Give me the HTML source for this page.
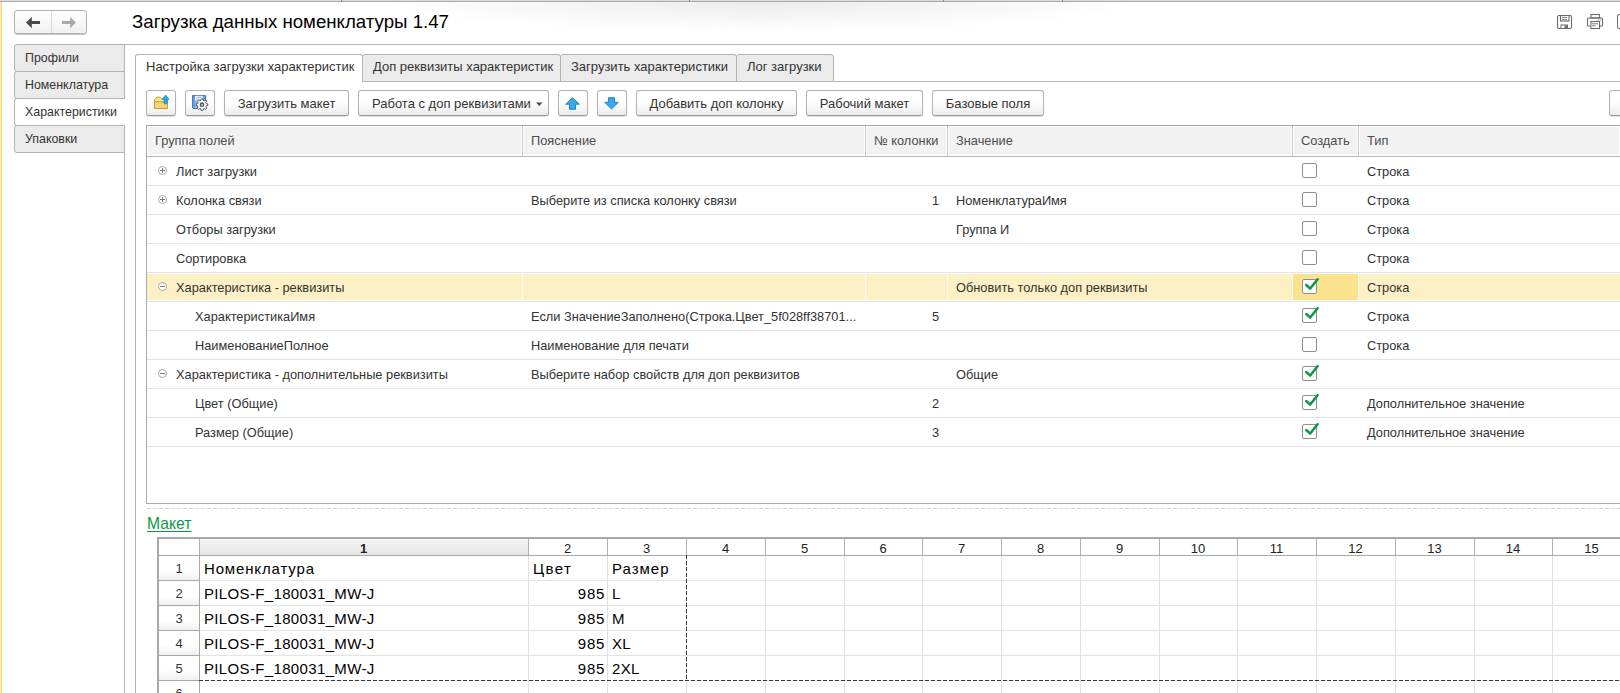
<!DOCTYPE html>
<html><head><meta charset="utf-8">
<style>
*{box-sizing:border-box;margin:0;padding:0}
html,body{width:1620px;height:693px;overflow:hidden;background:#fff}
body{position:relative;font-family:"Liberation Sans",sans-serif;font-size:13px;color:#333}
.a{position:absolute}
.t{position:absolute;white-space:nowrap;line-height:16px;font-size:12.8px}
/* top line & left strip */
#topline{left:0;top:0;width:1620px;height:2px;background:linear-gradient(#dcdcdc 50%,#a9a9a9 50%)}
#strip{left:0;top:2px;width:2px;height:691px;background:linear-gradient(90deg,#fde896 0,#fde896 60%,#d6c98e 100%)}
/* nav buttons */
#nav{left:14px;top:10px;width:73px;height:24px;border:1px solid #b0b0b0;border-radius:3px;background:linear-gradient(#fff,#f1f1f1);box-shadow:0 1px 0 #c8c8c8}
#nav .sep{left:36px;top:0;width:1px;height:22px;background:#d8d8d8}
#title{left:132px;top:11px;font-size:18.67px;line-height:22px;color:#000}
/* sidebar */
.stab{position:absolute;left:14px;width:111px;height:28px;border:1px solid #b4b4b4;border-radius:3px 0 0 3px;background:#ebebeb;padding-left:10px;padding-top:1px;line-height:25px;color:#333;font-size:12.4px}
.stab.sel{background:#fff;border-right:none;width:111px}
#sideline{left:124px;top:44px;width:1px;height:649px;background:#b4b4b4}
#contline{left:124px;top:44px;width:1496px;height:1px;background:#b4b4b4}
/* main panel */
#panel{left:135px;top:81px;width:1490px;height:620px;border-left:1px solid #b4b4b4;border-top:1px solid #b4b4b4}
.mtab{position:absolute;top:54px;height:28px;border:1px solid #b4b4b4;border-radius:3px 3px 0 0;background:#ebebeb;padding-left:10px;line-height:23px;color:#333}
.mtab.sel{background:#fff;border-bottom:none;height:28px}
/* buttons */
.btn{position:absolute;top:90px;height:26px;border:1px solid #b2b2b2;border-bottom-color:#9a9a9a;border-radius:3px;background:linear-gradient(#fff 0,#fff 45%,#ececec 100%);box-shadow:0 1px 1px rgba(0,0,0,.12);color:#333;text-align:center;line-height:26px;font-size:13px}
/* table */
#grid{left:146px;top:125px;width:1480px;height:379px;border:1px solid #a9a9a9;background:#fff}
.hd{position:absolute;top:126px;height:30px;background:#f2f2f2;border:1px solid #fff;color:#4d4d4d;line-height:27px;padding-left:8px}
.vsep{position:absolute;top:126px;width:1px;height:30px;background:#c8c8c8}
#hline{left:147px;top:156px;width:1473px;height:1px;background:#b5b5b5}
.rl{position:absolute;left:147px;width:1473px;height:1px;background:#e3e3e3}
.cb{position:absolute;width:15px;height:15px;border:1px solid #8f8f8f;border-radius:2px;background:#fff}
.tree{position:absolute;width:10px;height:10px}
</style></head><body>
<div class="a" style="left:380px;top:2px;width:760px;height:30px;background:radial-gradient(ellipse 50% 100% at 50% 0%,rgba(0,0,0,0.075),rgba(0,0,0,0.04) 50%,rgba(0,0,0,0) 100%)"></div>
<div class="a" id="topline"></div>
<div class="a" style="left:341px;top:0;width:1px;height:2px;background:#8a8a8a"></div>
<div class="a" style="left:689px;top:0;width:1px;height:2px;background:#8a8a8a"></div>
<div class="a" style="left:943px;top:0;width:1px;height:2px;background:#8a8a8a"></div>
<div class="a" style="left:1062px;top:0;width:1px;height:2px;background:#8a8a8a"></div>
<div class="a" id="strip"></div>

<div class="a" id="nav"><div class="a sep"></div>
<svg class="a" style="left:11px;top:6px" width="15" height="12" viewBox="0 0 15 12"><path d="M0 5.6 L5.8 0 L5.8 4.1 L14 4.1 L14 7 L5.8 7 L5.8 11.2 Z" fill="#4a4a4a"/></svg>
<svg class="a" style="left:47px;top:6px" width="15" height="12" viewBox="0 0 15 12"><path d="M14 5.6 L8.2 0 L8.2 4.1 L0 4.1 L0 7 L8.2 7 L8.2 11.2 Z" fill="#a8a8a8"/></svg>
</div>
<div class="t" id="title">Загрузка данных номенклатуры 1.47</div>

<!-- sidebar -->
<div class="a" id="contline"></div>
<div class="a" id="sideline"></div>
<div class="stab" style="top:44px">Профили</div>
<div class="stab" style="top:71px">Номенклатура</div>
<div class="stab sel" style="top:98px">Характеристики</div>
<div class="stab" style="top:125px">Упаковки</div>


<!-- main panel -->
<div class="a" style="left:135px;top:81px;width:1485px;height:1px;background:#b4b4b4"></div>
<div class="a" style="left:135px;top:60px;width:1px;height:633px;background:#b4b4b4"></div>
<div class="mtab sel" style="left:135px;width:228px">Настройка загрузки характеристик</div>
<div class="mtab" style="left:362px;width:199px">Доп реквизиты характеристик</div>
<div class="mtab" style="left:560px;width:177px">Загрузить характеристики</div>
<div class="mtab" style="left:736px;width:98px">Лог загрузки</div>

<div class="btn" style="left:146px;width:30px"></div>
<div class="btn" style="left:185px;width:30px"></div>
<div class="btn" style="left:224px;width:125px">Загрузить макет</div>
<div class="btn" style="left:358px;width:191px;text-align:left;padding-left:13px">Работа с доп реквизитами</div>
<div class="btn" style="left:558px;width:30px"></div>
<div class="btn" style="left:597px;width:30px"></div>
<div class="btn" style="left:636px;width:161px">Добавить доп колонку</div>
<div class="btn" style="left:806px;width:117px">Рабочий макет</div>
<div class="btn" style="left:932px;width:112px">Базовые поля</div>
<div class="btn" style="left:1609px;width:30px"></div>

<!-- grid -->
<div class="a" style="left:146px;top:125px;width:1474px;height:1px;background:#a9a9a9"></div>
<div class="a" style="left:146px;top:125px;width:1px;height:379px;background:#a9a9a9"></div>
<div class="a" style="left:146px;top:503px;width:1474px;height:1px;background:#a9a9a9"></div>
<div class="a" style="left:147px;top:126px;width:1473px;height:30px;background:#fff"></div>
<div class="a" style="left:148px;top:127px;width:373px;height:28px;background:#f2f2f2"></div>
<div class="t" style="left:155px;top:133px;color:#4d4d4d">Группа полей</div>
<div class="a" style="left:524px;top:127px;width:340px;height:28px;background:#f2f2f2"></div>
<div class="t" style="left:531px;top:133px;color:#4d4d4d">Пояснение</div>
<div class="a" style="left:522px;top:126px;width:1px;height:30px;background:#c9c9c9"></div>
<div class="a" style="left:867px;top:127px;width:79px;height:28px;background:#f2f2f2"></div>
<div class="t" style="left:874px;top:133px;color:#4d4d4d">№ колонки</div>
<div class="a" style="left:865px;top:126px;width:1px;height:30px;background:#c9c9c9"></div>
<div class="a" style="left:949px;top:127px;width:342px;height:28px;background:#f2f2f2"></div>
<div class="t" style="left:956px;top:133px;color:#4d4d4d">Значение</div>
<div class="a" style="left:947px;top:126px;width:1px;height:30px;background:#c9c9c9"></div>
<div class="a" style="left:1294px;top:127px;width:63px;height:28px;background:#f2f2f2"></div>
<div class="t" style="left:1301px;top:133px;color:#4d4d4d">Создать</div>
<div class="a" style="left:1292px;top:126px;width:1px;height:30px;background:#c9c9c9"></div>
<div class="a" style="left:1360px;top:127px;width:259px;height:28px;background:#f2f2f2"></div>
<div class="t" style="left:1367px;top:133px;color:#4d4d4d">Тип</div>
<div class="a" style="left:1358px;top:126px;width:1px;height:30px;background:#c9c9c9"></div>
<div class="a" style="left:147px;top:156px;width:1473px;height:1px;background:#b8b8b8"></div>
<svg class="a" style="left:158px;top:166px" width="9" height="9" viewBox="0 0 9 9"><circle cx="4.5" cy="4.5" r="4" fill="#fff" stroke="#a8a8a8" stroke-width="1"/><path d="M2 4.5 H7" stroke="#7a7a7a" stroke-width="1"/><path d="M4.5 2 V7" stroke="#7a7a7a" stroke-width="1"/></svg>
<div class="t" style="left:176px;top:164px">Лист загрузки</div>
<div class="cb" style="left:1302px;top:163px"></div>
<div class="t" style="left:1367px;top:164px">Строка</div>
<div class="rl" style="top:185px"></div>
<svg class="a" style="left:158px;top:195px" width="9" height="9" viewBox="0 0 9 9"><circle cx="4.5" cy="4.5" r="4" fill="#fff" stroke="#a8a8a8" stroke-width="1"/><path d="M2 4.5 H7" stroke="#7a7a7a" stroke-width="1"/><path d="M4.5 2 V7" stroke="#7a7a7a" stroke-width="1"/></svg>
<div class="t" style="left:176px;top:193px">Колонка связи</div>
<div class="t" style="left:531px;top:193px">Выберите из списка колонку связи</div>
<div class="t" style="left:865px;width:74px;text-align:right;top:193px">1</div>
<div class="t" style="left:956px;top:193px">НоменклатураИмя</div>
<div class="cb" style="left:1302px;top:192px"></div>
<div class="t" style="left:1367px;top:193px">Строка</div>
<div class="rl" style="top:214px"></div>
<div class="t" style="left:176px;top:222px">Отборы загрузки</div>
<div class="t" style="left:956px;top:222px">Группа И</div>
<div class="cb" style="left:1302px;top:221px"></div>
<div class="t" style="left:1367px;top:222px">Строка</div>
<div class="rl" style="top:243px"></div>
<div class="t" style="left:176px;top:251px">Сортировка</div>
<div class="cb" style="left:1302px;top:250px"></div>
<div class="t" style="left:1367px;top:251px">Строка</div>
<div class="rl" style="top:272px"></div>
<div class="a" style="left:147px;top:274px;width:1473px;height:26px;background:#fdf0c4"></div>
<div class="a" style="left:522px;top:273px;width:1px;height:28px;background:#fffaf0"></div>
<div class="a" style="left:865px;top:273px;width:1px;height:28px;background:#fffaf0"></div>
<div class="a" style="left:947px;top:273px;width:1px;height:28px;background:#fffaf0"></div>
<div class="a" style="left:1292px;top:273px;width:1px;height:28px;background:#fffaf0"></div>
<div class="a" style="left:1358px;top:273px;width:1px;height:28px;background:#fffaf0"></div>
<div class="a" style="left:1293px;top:274px;width:65px;height:26px;background:#fbe28f"></div>
<svg class="a" style="left:158px;top:282px" width="9" height="9" viewBox="0 0 9 9"><circle cx="4.5" cy="4.5" r="4" fill="#fff" stroke="#a8a8a8" stroke-width="1"/><path d="M2 4.5 H7" stroke="#7a7a7a" stroke-width="1"/></svg>
<div class="t" style="left:176px;top:280px">Характеристика - реквизиты</div>
<div class="t" style="left:956px;top:280px">Обновить только доп реквизиты</div>
<div class="cb" style="left:1302px;top:279px"><svg class="a" style="left:1px;top:-2px" width="15" height="14" viewBox="0 0 15 14"><path d="M2.3 7.0 L6.2 10.6 L13.6 1.2" fill="none" stroke="#119447" stroke-width="2.5" stroke-linecap="round" stroke-linejoin="round"/></svg></div>
<div class="t" style="left:1367px;top:280px">Строка</div>
<div class="rl" style="top:301px"></div>
<div class="t" style="left:195px;top:309px">ХарактеристикаИмя</div>
<div class="t" style="left:531px;top:309px">Если ЗначениеЗаполнено(Строка.Цвет_5f028ff38701...</div>
<div class="t" style="left:865px;width:74px;text-align:right;top:309px">5</div>
<div class="cb" style="left:1302px;top:308px"><svg class="a" style="left:1px;top:-2px" width="15" height="14" viewBox="0 0 15 14"><path d="M2.3 7.0 L6.2 10.6 L13.6 1.2" fill="none" stroke="#119447" stroke-width="2.5" stroke-linecap="round" stroke-linejoin="round"/></svg></div>
<div class="t" style="left:1367px;top:309px">Строка</div>
<div class="rl" style="top:330px"></div>
<div class="t" style="left:195px;top:338px">НаименованиеПолное</div>
<div class="t" style="left:531px;top:338px">Наименование для печати</div>
<div class="cb" style="left:1302px;top:337px"></div>
<div class="t" style="left:1367px;top:338px">Строка</div>
<div class="rl" style="top:359px"></div>
<svg class="a" style="left:158px;top:369px" width="9" height="9" viewBox="0 0 9 9"><circle cx="4.5" cy="4.5" r="4" fill="#fff" stroke="#a8a8a8" stroke-width="1"/><path d="M2 4.5 H7" stroke="#7a7a7a" stroke-width="1"/></svg>
<div class="t" style="left:176px;top:367px">Характеристика - дополнительные реквизиты</div>
<div class="t" style="left:531px;top:367px">Выберите набор свойств для доп реквизитов</div>
<div class="t" style="left:956px;top:367px">Общие</div>
<div class="cb" style="left:1302px;top:366px"><svg class="a" style="left:1px;top:-2px" width="15" height="14" viewBox="0 0 15 14"><path d="M2.3 7.0 L6.2 10.6 L13.6 1.2" fill="none" stroke="#119447" stroke-width="2.5" stroke-linecap="round" stroke-linejoin="round"/></svg></div>
<div class="rl" style="top:388px"></div>
<div class="t" style="left:195px;top:396px">Цвет (Общие)</div>
<div class="t" style="left:865px;width:74px;text-align:right;top:396px">2</div>
<div class="cb" style="left:1302px;top:395px"><svg class="a" style="left:1px;top:-2px" width="15" height="14" viewBox="0 0 15 14"><path d="M2.3 7.0 L6.2 10.6 L13.6 1.2" fill="none" stroke="#119447" stroke-width="2.5" stroke-linecap="round" stroke-linejoin="round"/></svg></div>
<div class="t" style="left:1367px;top:396px">Дополнительное значение</div>
<div class="rl" style="top:417px"></div>
<div class="t" style="left:195px;top:425px">Размер (Общие)</div>
<div class="t" style="left:865px;width:74px;text-align:right;top:425px">3</div>
<div class="cb" style="left:1302px;top:424px"><svg class="a" style="left:1px;top:-2px" width="15" height="14" viewBox="0 0 15 14"><path d="M2.3 7.0 L6.2 10.6 L13.6 1.2" fill="none" stroke="#119447" stroke-width="2.5" stroke-linecap="round" stroke-linejoin="round"/></svg></div>
<div class="t" style="left:1367px;top:425px">Дополнительное значение</div>
<div class="rl" style="top:446px"></div>

<!-- sheet -->
<div class="a" style="left:147px;top:508px;width:1473px;height:1px;background:repeating-linear-gradient(90deg,#cfcfcf 0,#cfcfcf 4px,transparent 4px,transparent 6px)"></div>
<div class="t" style="left:147px;top:514px;font-size:15.7px;line-height:19px;color:#0e9648;text-decoration:underline;text-underline-offset:2px">Макет</div>
<div class="a" style="left:157px;top:537px;width:1463px;height:2px;background:#a8a8a8"></div>
<div class="a" style="left:157px;top:537px;width:2px;height:156px;background:#a8a8a8"></div>
<div class="a" style="left:159px;top:539px;width:1461px;height:16px;background:#fff"></div>
<div class="a" style="left:200px;top:539px;width:328px;height:16px;background:linear-gradient(#f4f4f4,#e4e4e4)"></div>
<div class="a" style="left:159px;top:556px;width:40px;height:24px;background:linear-gradient(#fff 60%,#f0f0f0)"></div>
<div class="a" style="left:159px;top:581px;width:40px;height:24px;background:linear-gradient(#fff 60%,#f0f0f0)"></div>
<div class="a" style="left:159px;top:606px;width:40px;height:24px;background:linear-gradient(#fff 60%,#f0f0f0)"></div>
<div class="a" style="left:159px;top:631px;width:40px;height:24px;background:linear-gradient(#fff 60%,#f0f0f0)"></div>
<div class="a" style="left:159px;top:656px;width:40px;height:24px;background:linear-gradient(#fff 60%,#f0f0f0)"></div>
<div class="a" style="left:159px;top:681px;width:40px;height:24px;background:linear-gradient(#fff 60%,#f0f0f0)"></div>
<div class="a" style="left:528px;top:555px;width:1px;height:138px;background:#e0e0e0"></div>
<div class="a" style="left:607px;top:555px;width:1px;height:138px;background:#e0e0e0"></div>
<div class="a" style="left:686px;top:555px;width:1px;height:138px;background:#e0e0e0"></div>
<div class="a" style="left:765px;top:555px;width:1px;height:138px;background:#e0e0e0"></div>
<div class="a" style="left:844px;top:555px;width:1px;height:138px;background:#e0e0e0"></div>
<div class="a" style="left:922px;top:555px;width:1px;height:138px;background:#e0e0e0"></div>
<div class="a" style="left:1001px;top:555px;width:1px;height:138px;background:#e0e0e0"></div>
<div class="a" style="left:1080px;top:555px;width:1px;height:138px;background:#e0e0e0"></div>
<div class="a" style="left:1159px;top:555px;width:1px;height:138px;background:#e0e0e0"></div>
<div class="a" style="left:1237px;top:555px;width:1px;height:138px;background:#e0e0e0"></div>
<div class="a" style="left:1316px;top:555px;width:1px;height:138px;background:#e0e0e0"></div>
<div class="a" style="left:1395px;top:555px;width:1px;height:138px;background:#e0e0e0"></div>
<div class="a" style="left:1474px;top:555px;width:1px;height:138px;background:#e0e0e0"></div>
<div class="a" style="left:1552px;top:555px;width:1px;height:138px;background:#e0e0e0"></div>
<div class="a" style="left:1631px;top:555px;width:1px;height:138px;background:#e0e0e0"></div>
<div class="a" style="left:199px;top:580px;width:1421px;height:1px;background:#e3e3e3"></div>
<div class="a" style="left:199px;top:605px;width:1421px;height:1px;background:#e3e3e3"></div>
<div class="a" style="left:199px;top:630px;width:1421px;height:1px;background:#e3e3e3"></div>
<div class="a" style="left:199px;top:655px;width:1421px;height:1px;background:#e3e3e3"></div>
<div class="a" style="left:199px;top:680px;width:1421px;height:1px;background:#e3e3e3"></div>
<div class="a" style="left:199px;top:705px;width:1421px;height:1px;background:#e3e3e3"></div>
<div class="a" style="left:199px;top:539px;width:1px;height:16px;background:#b0b0b0"></div>
<div class="a" style="left:528px;top:539px;width:1px;height:16px;background:#b0b0b0"></div>
<div class="a" style="left:607px;top:539px;width:1px;height:16px;background:#b0b0b0"></div>
<div class="a" style="left:686px;top:539px;width:1px;height:16px;background:#b0b0b0"></div>
<div class="a" style="left:765px;top:539px;width:1px;height:16px;background:#b0b0b0"></div>
<div class="a" style="left:844px;top:539px;width:1px;height:16px;background:#b0b0b0"></div>
<div class="a" style="left:922px;top:539px;width:1px;height:16px;background:#b0b0b0"></div>
<div class="a" style="left:1001px;top:539px;width:1px;height:16px;background:#b0b0b0"></div>
<div class="a" style="left:1080px;top:539px;width:1px;height:16px;background:#b0b0b0"></div>
<div class="a" style="left:1159px;top:539px;width:1px;height:16px;background:#b0b0b0"></div>
<div class="a" style="left:1237px;top:539px;width:1px;height:16px;background:#b0b0b0"></div>
<div class="a" style="left:1316px;top:539px;width:1px;height:16px;background:#b0b0b0"></div>
<div class="a" style="left:1395px;top:539px;width:1px;height:16px;background:#b0b0b0"></div>
<div class="a" style="left:1474px;top:539px;width:1px;height:16px;background:#b0b0b0"></div>
<div class="a" style="left:1552px;top:539px;width:1px;height:16px;background:#b0b0b0"></div>
<div class="a" style="left:1631px;top:539px;width:1px;height:16px;background:#b0b0b0"></div>
<div class="a" style="left:159px;top:555px;width:1461px;height:1px;background:#a8a8a8"></div>
<div class="a" style="left:199px;top:555px;width:1px;height:138px;background:#a8a8a8"></div>
<div class="a" style="left:159px;top:580px;width:40px;height:1px;background:#a8a8a8"></div>
<div class="a" style="left:159px;top:605px;width:40px;height:1px;background:#a8a8a8"></div>
<div class="a" style="left:159px;top:630px;width:40px;height:1px;background:#a8a8a8"></div>
<div class="a" style="left:159px;top:655px;width:40px;height:1px;background:#a8a8a8"></div>
<div class="a" style="left:159px;top:680px;width:40px;height:1px;background:#a8a8a8"></div>
<div class="a" style="left:159px;top:705px;width:40px;height:1px;background:#a8a8a8"></div>
<div class="t" style="left:199px;width:329px;text-align:center;top:541px;font-size:13px;line-height:16px;color:#222;font-weight:bold">1</div>
<div class="t" style="left:528px;width:79px;text-align:center;top:541px;font-size:13px;line-height:16px;color:#222;font-weight:normal">2</div>
<div class="t" style="left:607px;width:79px;text-align:center;top:541px;font-size:13px;line-height:16px;color:#222;font-weight:normal">3</div>
<div class="t" style="left:686px;width:79px;text-align:center;top:541px;font-size:13px;line-height:16px;color:#222;font-weight:normal">4</div>
<div class="t" style="left:765px;width:79px;text-align:center;top:541px;font-size:13px;line-height:16px;color:#222;font-weight:normal">5</div>
<div class="t" style="left:844px;width:78px;text-align:center;top:541px;font-size:13px;line-height:16px;color:#222;font-weight:normal">6</div>
<div class="t" style="left:922px;width:79px;text-align:center;top:541px;font-size:13px;line-height:16px;color:#222;font-weight:normal">7</div>
<div class="t" style="left:1001px;width:79px;text-align:center;top:541px;font-size:13px;line-height:16px;color:#222;font-weight:normal">8</div>
<div class="t" style="left:1080px;width:79px;text-align:center;top:541px;font-size:13px;line-height:16px;color:#222;font-weight:normal">9</div>
<div class="t" style="left:1159px;width:78px;text-align:center;top:541px;font-size:13px;line-height:16px;color:#222;font-weight:normal">10</div>
<div class="t" style="left:1237px;width:79px;text-align:center;top:541px;font-size:13px;line-height:16px;color:#222;font-weight:normal">11</div>
<div class="t" style="left:1316px;width:79px;text-align:center;top:541px;font-size:13px;line-height:16px;color:#222;font-weight:normal">12</div>
<div class="t" style="left:1395px;width:79px;text-align:center;top:541px;font-size:13px;line-height:16px;color:#222;font-weight:normal">13</div>
<div class="t" style="left:1474px;width:78px;text-align:center;top:541px;font-size:13px;line-height:16px;color:#222;font-weight:normal">14</div>
<div class="t" style="left:1552px;width:79px;text-align:center;top:541px;font-size:13px;line-height:16px;color:#222;font-weight:normal">15</div>
<div class="t" style="left:159px;width:40px;text-align:center;top:561px;font-size:13px;line-height:16px;color:#333">1</div>
<div class="t" style="left:159px;width:40px;text-align:center;top:586px;font-size:13px;line-height:16px;color:#333">2</div>
<div class="t" style="left:159px;width:40px;text-align:center;top:611px;font-size:13px;line-height:16px;color:#333">3</div>
<div class="t" style="left:159px;width:40px;text-align:center;top:636px;font-size:13px;line-height:16px;color:#333">4</div>
<div class="t" style="left:159px;width:40px;text-align:center;top:661px;font-size:13px;line-height:16px;color:#333">5</div>
<div class="t" style="left:159px;width:40px;text-align:center;top:686px;font-size:13px;line-height:16px;color:#333">6</div>
<div class="a" style="left:686px;top:555px;width:1px;height:125px;background:repeating-linear-gradient(180deg,#3a3a3a 0,#3a3a3a 4px,transparent 4px,transparent 6px)"></div>
<div class="a" style="left:199px;top:680px;width:1421px;height:1px;background:repeating-linear-gradient(90deg,#3a3a3a 0,#3a3a3a 4px,transparent 4px,transparent 6px)"></div>
<div class="t" style="left:204px;top:560px;font-size:15px;line-height:18px;color:#000;letter-spacing:0.85px">Номенклатура</div>
<div class="t" style="left:533px;top:560px;font-size:15px;line-height:18px;color:#000;letter-spacing:1.45px">Цвет</div>
<div class="t" style="left:612px;top:560px;font-size:15px;line-height:18px;color:#000;letter-spacing:1.0px">Размер</div>
<div class="t" style="left:204px;top:585px;font-size:15px;line-height:18px;color:#000;letter-spacing:0.35px">PILOS-F_180031_MW-J</div>
<div class="t" style="left:528px;width:77px;text-align:right;top:585px;font-size:15px;line-height:18px;color:#000;letter-spacing:0.7px">985</div>
<div class="t" style="left:612px;top:585px;font-size:15px;line-height:18px;color:#000;letter-spacing:0.3px">L</div>
<div class="t" style="left:204px;top:610px;font-size:15px;line-height:18px;color:#000;letter-spacing:0.35px">PILOS-F_180031_MW-J</div>
<div class="t" style="left:528px;width:77px;text-align:right;top:610px;font-size:15px;line-height:18px;color:#000;letter-spacing:0.7px">985</div>
<div class="t" style="left:612px;top:610px;font-size:15px;line-height:18px;color:#000;letter-spacing:0.3px">M</div>
<div class="t" style="left:204px;top:635px;font-size:15px;line-height:18px;color:#000;letter-spacing:0.35px">PILOS-F_180031_MW-J</div>
<div class="t" style="left:528px;width:77px;text-align:right;top:635px;font-size:15px;line-height:18px;color:#000;letter-spacing:0.7px">985</div>
<div class="t" style="left:612px;top:635px;font-size:15px;line-height:18px;color:#000;letter-spacing:0.3px">XL</div>
<div class="t" style="left:204px;top:660px;font-size:15px;line-height:18px;color:#000;letter-spacing:0.35px">PILOS-F_180031_MW-J</div>
<div class="t" style="left:528px;width:77px;text-align:right;top:660px;font-size:15px;line-height:18px;color:#000;letter-spacing:0.7px">985</div>
<div class="t" style="left:612px;top:660px;font-size:15px;line-height:18px;color:#000;letter-spacing:0.3px">2XL</div>

<!-- icons -->
<svg class="a" style="left:153px;top:94px" width="18" height="16" viewBox="0 0 18 16">
<path d="M1.5 14.5 V5.5 L3.8 3.2 H7.2 L8.6 4.6 H14.5 V14.5 Z" fill="#fbe38a" stroke="#d39a3a" stroke-width="1"/>
<path d="M1.5 7.8 H14.5 V14.5 H1.5 Z" fill="#f6d476" stroke="#d39a3a" stroke-width="1" stroke-linejoin="round"/>
<path d="M11 9.8 V5.3 H9 L12.6 1 L16.2 5.3 H14.2 V9.8 Z" fill="#2fa4e8" stroke="#1f88cf" stroke-width="0.7"/>
</svg>
<svg class="a" style="left:191px;top:94px" width="18" height="18" viewBox="0 0 18 18">
<path d="M1.5 1.5 H14.5 V13 Q14.5 14.5 13 14.5 H3 Q1.5 14.5 1.5 13 Z" fill="#8dbbf0" stroke="#4877bb" stroke-width="1"/>
<rect x="2" y="2" width="2" height="12" fill="#6a9ddf"/>
<rect x="12" y="2" width="2" height="10" fill="#6a9ddf"/>
<rect x="4.2" y="1.8" width="7.6" height="4.6" fill="#f4f8fd"/>
<path d="M5.5 3.3 H10.5 M5.5 5.2 H8.5" stroke="#7aa6dc" stroke-width="0.8"/>
<path d="M15.36 9.58 L16.74 9.88 L16.74 11.52 L15.36 11.82 L14.87 12.99 L15.64 14.18 L14.48 15.34 L13.29 14.57 L12.12 15.06 L11.82 16.44 L10.18 16.44 L9.88 15.06 L8.71 14.57 L7.52 15.34 L6.36 14.18 L7.13 12.99 L6.64 11.82 L5.26 11.52 L5.26 9.88 L6.64 9.58 L7.13 8.41 L6.36 7.22 L7.52 6.06 L8.71 6.83 L9.88 6.34 L10.18 4.96 L11.82 4.96 L12.12 6.34 L13.29 6.83 L14.48 6.06 L15.64 7.22 L14.87 8.41 Z" fill="#fff" stroke="#4f5864" stroke-width="1" stroke-linejoin="round"/>
<circle cx="11.0" cy="10.7" r="1.7" fill="#c8c8c8" stroke="#4f5864" stroke-width="1.3"/>
</svg>
<svg class="a" style="left:565px;top:97px" width="15" height="13" viewBox="0 0 15 13">
<path d="M0.7 7.2 L7.5 0.7 L14.3 7.2 H10.5 V12.3 H4.5 V7.2 Z" fill="#3aa9e6" stroke="#1f84c8" stroke-width="1" stroke-linejoin="round"/>
</svg>
<svg class="a" style="left:604px;top:97px" width="15" height="13" viewBox="0 0 15 13">
<path d="M0.7 5.3 L7.5 12 L14.3 5.3 H10.5 V0.7 H4.5 V5.3 Z" fill="#3aa9e6" stroke="#1f84c8" stroke-width="1" stroke-linejoin="round"/>
</svg>
<svg class="a" style="left:536px;top:102px" width="7" height="5" viewBox="0 0 7 5"><path d="M0 0.5 H6.5 L3.25 4 Z" fill="#4a4a4a"/></svg>
<svg class="a" style="left:1556px;top:14px" width="17" height="16" viewBox="0 0 17 16">
<rect x="1.5" y="1.5" width="14" height="13" rx="1.5" fill="none" stroke="#6b6b6b" stroke-width="1.1"/>
<rect x="4.5" y="1.5" width="8.5" height="5.5" fill="none" stroke="#6b6b6b" stroke-width="1.1"/>
<path d="M6 3.5 H11 M6 5.5 H11" stroke="#6b6b6b" stroke-width="0.8"/>
<rect x="5" y="11" width="6.5" height="3.5" fill="none" stroke="#6b6b6b" stroke-width="1"/>
<rect x="8.5" y="11.5" width="2.5" height="3" fill="#6b6b6b"/>
</svg>
<svg class="a" style="left:1586px;top:13px" width="18" height="17" viewBox="0 0 18 17">
<rect x="4.9" y="1.5" width="8.6" height="3.5" fill="none" stroke="#6b6b6b" stroke-width="1.1"/>
<path d="M4 13 H2.5 Q1.5 13 1.5 12 V6 Q1.5 5 2.5 5 H15.5 Q16.5 5 16.5 6 V12 Q16.5 13 15.5 13 H14" fill="none" stroke="#6b6b6b" stroke-width="1.1"/>
<rect x="4.9" y="8.5" width="8.6" height="7" fill="#fff" stroke="#6b6b6b" stroke-width="1.1"/>
<path d="M6 10.8 H12 M6 12.8 H9.5 M11.8 7 H13 M14 7 H15" stroke="#6b6b6b" stroke-width="0.9"/>
</svg>
<div class="a" style="left:1617px;top:14px;width:8px;height:15px;border:1.2px solid #6b6b6b;border-radius:2px"></div>

</body></html>
